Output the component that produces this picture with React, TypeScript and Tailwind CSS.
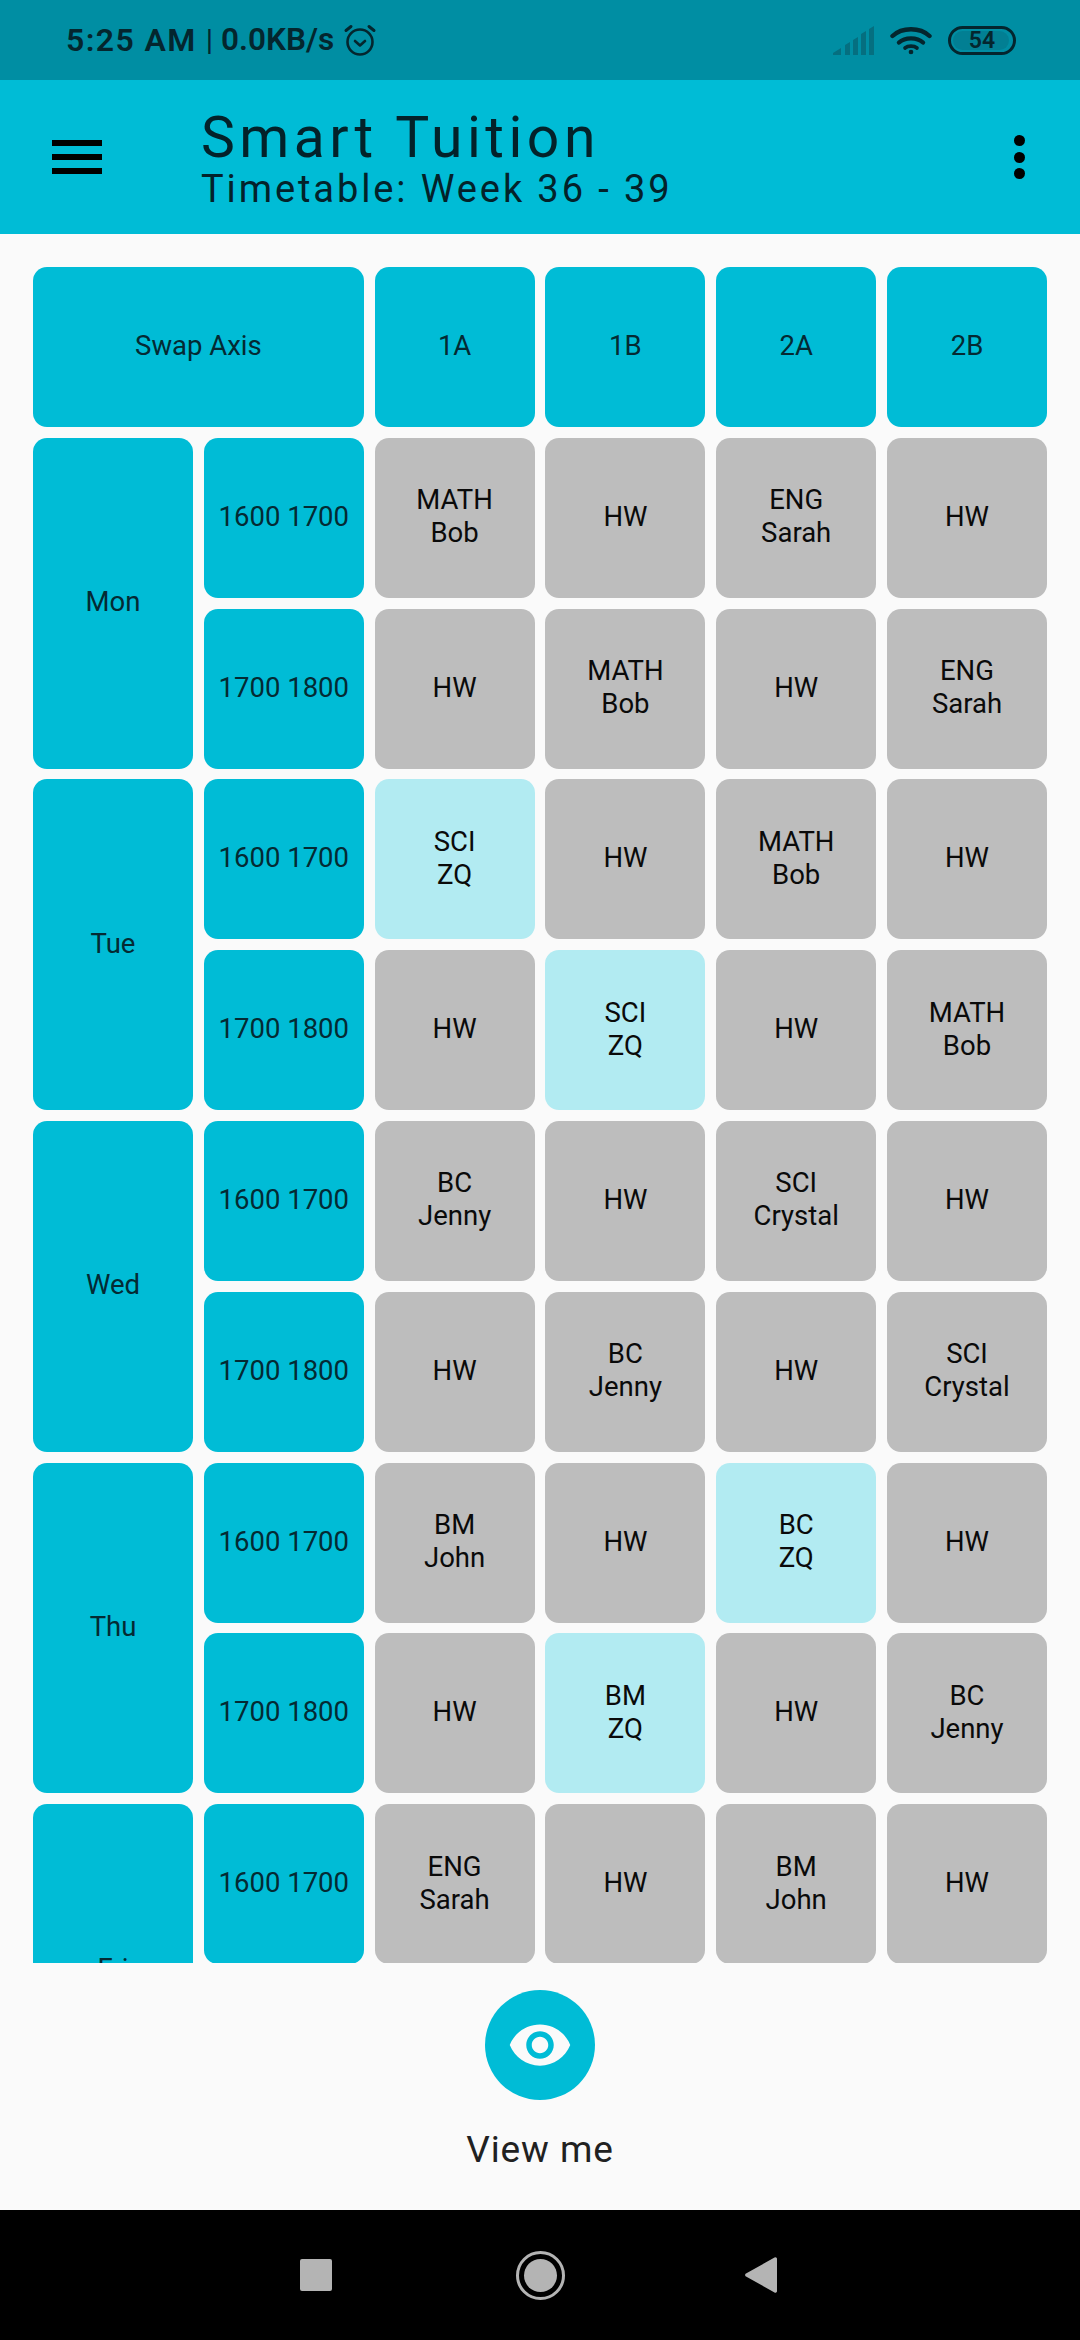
import React from 'react';

type Slot = { top: string; bottom?: string; free?: boolean };

const hw: Slot = { top: 'HW' };
const s = (top: string, bottom: string, free?: boolean): Slot => ({ top, bottom, free });

const days: { name: string; rows: Slot[][] }[] = [
  {
    name: 'Mon',
    rows: [
      [s('MATH', 'Bob'), hw, s('ENG', 'Sarah'), hw],
      [hw, s('MATH', 'Bob'), hw, s('ENG', 'Sarah')],
    ],
  },
  {
    name: 'Tue',
    rows: [
      [s('SCI', 'ZQ', true), hw, s('MATH', 'Bob'), hw],
      [hw, s('SCI', 'ZQ', true), hw, s('MATH', 'Bob')],
    ],
  },
  {
    name: 'Wed',
    rows: [
      [s('BC', 'Jenny'), hw, s('SCI', 'Crystal'), hw],
      [hw, s('BC', 'Jenny'), hw, s('SCI', 'Crystal')],
    ],
  },
  {
    name: 'Thu',
    rows: [
      [s('BM', 'John'), hw, s('BC', 'ZQ', true), hw],
      [hw, s('BM', 'ZQ', true), hw, s('BC', 'Jenny')],
    ],
  },
  // second Friday row is below the fold, the day cell just spans into empty space
  { name: 'Fri', rows: [[s('ENG', 'Sarah'), hw, s('BM', 'John'), hw]] },
];

const classes = ['1A', '1B', '2A', '2B'];
const times = ['1600 1700', '1700 1800'];

const headCell =
  'flex items-center justify-center rounded-[14px] bg-[#00bcd6] pb-[3px] text-[27.5px] leading-[33px] text-[#042a33]';

const StatusBar = () => (
  <div className="flex h-[80px] items-center bg-[#008ea3] pl-[66px] pr-[64px] text-[#04262e]">
    <span className="text-[32px] font-semibold leading-none tracking-[1.4px]">5:25 AM</span>
    <span className="ml-[9px] text-[30px] font-normal leading-none">|</span>
    <span className="ml-[8px] text-[31.5px] font-semibold leading-none">0.0KB/s</span>
    <svg className="ml-[9px]" width="34" height="34" viewBox="0 0 34 34" fill="none" stroke="currentColor" strokeWidth="2.6" strokeLinecap="round" strokeLinejoin="round">
      <circle cx="17" cy="19" r="12.5" />
      <path d="M12 18l5 4.5 5-4.5" />
      <path d="M3 7.5L8 3.5M31 7.5L26 3.5" strokeWidth="3" />
    </svg>
    <div className="flex-1" />
    <svg width="41" height="29" viewBox="0 0 41 29" fill="#056f80">
      <path d="M0 29v-2l8-5v7zM12 29V19l5-3v13zM20 29V14l5-3v18zM28 29V8l5-3v24zM36 29V3l5-3v29z" />
    </svg>
    <svg className="ml-[16px]" width="42" height="29" viewBox="0 0 42 29" fill="none" stroke="currentColor" strokeWidth="4.4" strokeLinecap="round">
      <path d="M2.5 10C12 1 30 1 39.5 10" />
      <path d="M9 16.5C15 11 27 11 33 16.5" />
      <path d="M15 22C18 19.5 24 19.5 27 22" strokeWidth="3.6" />
      <circle cx="21" cy="26" r="1.6" fill="currentColor" strokeWidth="1.5" />
    </svg>
    <div className="relative ml-[16px] flex h-[29px] w-[68px] items-center justify-center overflow-hidden rounded-full border-[3px] border-[#04262e]">
      <div className="absolute inset-y-[2px] left-[2px] w-[56px] rounded-full bg-[#027f93]" />
      <span className="relative text-[23px] font-semibold leading-none">54</span>
    </div>
  </div>
);

const AppBar = () => (
  <header className="flex h-[154px] items-center bg-[#00bcd6] text-[#03222a]">
    <div className="ml-[52px] flex h-[34px] w-[50px] flex-col justify-between">
      <div className="h-[6px] bg-black" />
      <div className="h-[6px] bg-black" />
      <div className="h-[6px] bg-black" />
    </div>
    <div className="ml-[99px] flex flex-col pt-[3px]">
      <span className="text-[57px] font-normal leading-[60px] tracking-[4.5px]">Smart Tuition</span>
      <span className="text-[38px] font-normal leading-[42px] tracking-[2.9px]">Timetable: Week 36 - 39</span>
    </div>
    <div className="ml-auto mr-[55px] flex h-[44px] flex-col justify-between">
      <div className="h-[11px] w-[11px] rounded-full bg-black" />
      <div className="h-[11px] w-[11px] rounded-full bg-black" />
      <div className="h-[11px] w-[11px] rounded-full bg-black" />
    </div>
  </header>
);

const SlotCell = ({ slot }: { slot: Slot }) => (
  <div
    className={
      'flex flex-col items-center justify-center rounded-[14px] pb-[3px] text-[27.5px] leading-[33px] text-[#0a0a0a] ' +
      (slot.free ? 'bg-[#b2ebf2]' : 'bg-[#bdbdbd]')
    }
  >
    <span>{slot.top}</span>
    {slot.bottom && <span>{slot.bottom}</span>}
  </div>
);

const Timetable = () => (
  <main className="min-h-0 flex-1 overflow-hidden pl-[33px] pt-[33px]">
    <div className="grid grid-cols-[repeat(6,160px)] auto-rows-[160px] gap-[10.8px]">
      <div className={headCell + ' col-span-2'}>Swap Axis</div>
      {classes.map((c) => (
        <div key={c} className={headCell}>
          {c}
        </div>
      ))}
      {days.map((day) => (
        <React.Fragment key={day.name}>
          <div className={headCell + ' row-span-2'}>{day.name}</div>
          {day.rows.map((row, i) => (
            <React.Fragment key={i}>
              <div className={headCell}>{times[i]}</div>
              {row.map((slot, j) => (
                <SlotCell key={j} slot={slot} />
              ))}
            </React.Fragment>
          ))}
        </React.Fragment>
      ))}
    </div>
  </main>
);

const ViewMe = () => (
  <div className="flex h-[247px] flex-col items-center pt-[27px]">
    <button className="flex h-[110px] w-[110px] items-center justify-center rounded-full bg-[#00bcd6]">
      <svg width="66" height="66" viewBox="0 0 24 24" fill="#fafafa">
        <path d="M12 4.5C7 4.5 2.73 7.61 1 12c1.73 4.39 6 7.5 11 7.5s9.27-3.11 11-7.5c-1.73-4.39-6-7.5-11-7.5zM12 17c-2.76 0-5-2.24-5-5s2.24-5 5-5 5 2.24 5 5-2.24 5-5 5zm0-8c-1.66 0-3 1.34-3 3s1.34 3 3 3 3-1.34 3-3-1.34-3-3-3z" />
      </svg>
    </button>
    <span className="mt-[28px] text-[37px] leading-[44px] tracking-[0.9px] text-[#212121]">View me</span>
  </div>
);

const NavBar = () => (
  <nav className="relative flex h-[130px] items-center justify-center bg-black">
    <div className="absolute left-[300px] top-[49px] h-[32px] w-[32px] rounded-[2px] bg-[#b4b4b4]" />
    <div className="flex h-[49px] w-[49px] items-center justify-center rounded-full border-[3px] border-[#b4b4b4]">
      <div className="h-[33px] w-[33px] rounded-full bg-[#b4b4b4]" />
    </div>
    <svg className="absolute left-[745px] top-[47px]" width="32" height="36" viewBox="0 0 32 36" fill="#b4b4b4">
      <path d="M29.5 .5L1 16.5a1.7 1.7 0 0 0 0 3L29.5 35.5a1.6 1.6 0 0 0 2.5-1.4V1.9A1.6 1.6 0 0 0 29.5 .5z" />
    </svg>
  </nav>
);

export default function App() {
  return (
    <div className="flex h-[2340px] w-[1080px] flex-col overflow-hidden bg-[#fafafa] font-[Roboto,sans-serif]">
      <StatusBar />
      <AppBar />
      <Timetable />
      <ViewMe />
      <NavBar />
    </div>
  );
}
